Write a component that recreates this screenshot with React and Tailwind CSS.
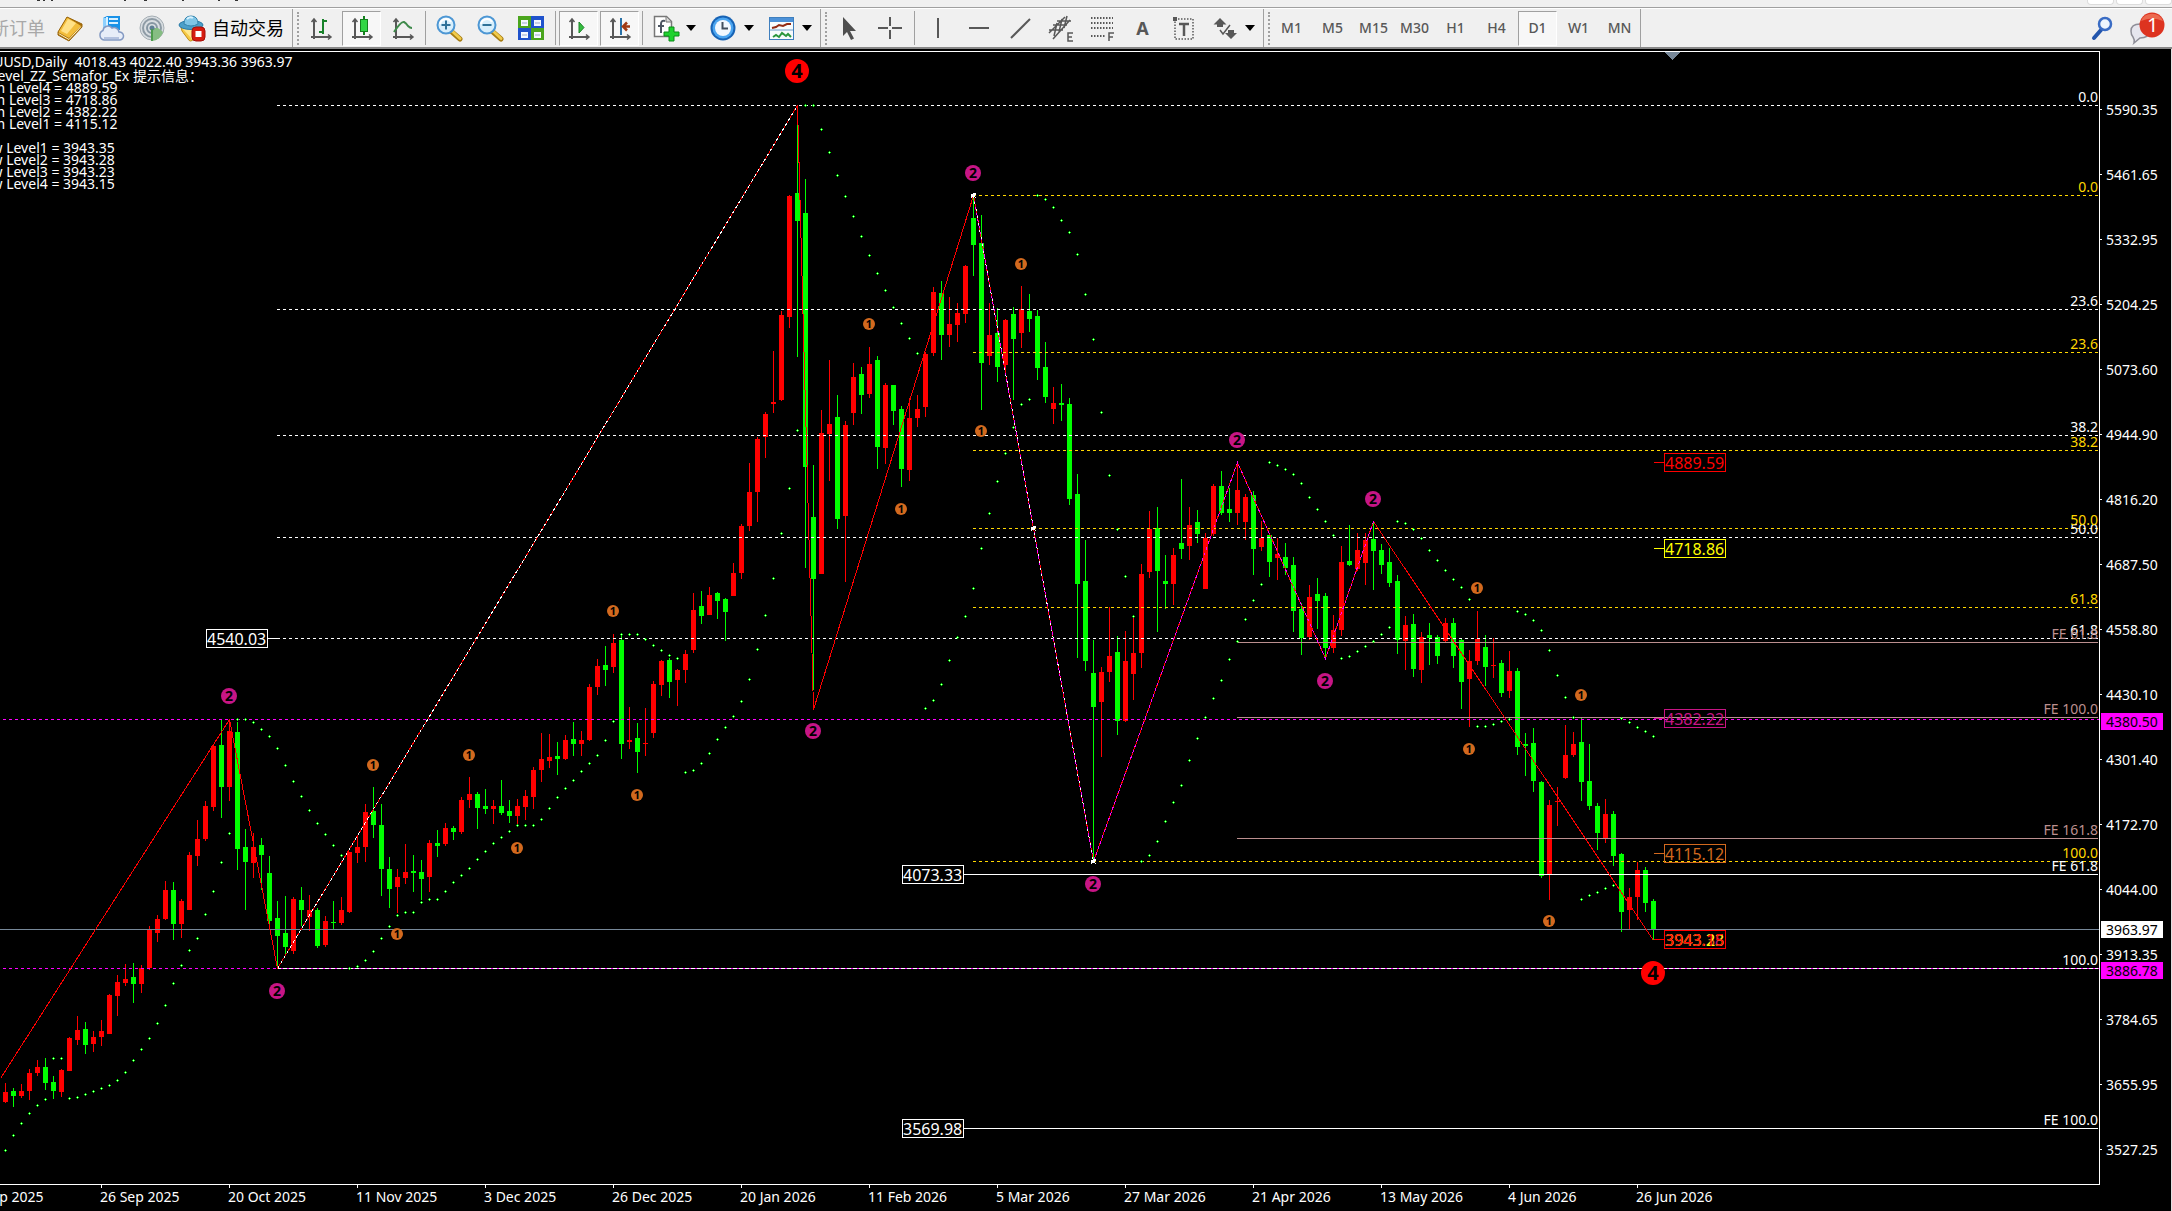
import React from "react";

/* One candle per row: high, body top, body bottom, low, colour (r = up, g = down). */
const CANDLES = `1083 1092 1102 1103 r|1088 1091 1096 1107 g|1084 1091 1096 1098 r|1069 1073 1091 1100 r|1060 1067 1073 1076 r|1058 1067 1083 1090 g|1076 1082 1091 1099 g|1069 1070 1092 1097 r|1037 1038 1071 1071 r|1016 1030 1040 1045 r
1022 1029 1045 1054 g|1031 1037 1044 1052 r|1020 1031 1037 1046 r|994 995 1034 1034 r|975 982 996 1016 r|964 979 983 986 r|963 977 984 1003 g|965 968 984 993 r|926 930 968 970 r|915 919 933 942 r
881 890 919 920 r|882 890 924 940 g|899 901 924 938 r|852 855 910 910 r|820 839 856 866 r|801 806 839 841 r|745 746 807 811 r|720 745 787 818 g|720 731 787 801 r|722 732 849 870 g
829 847 862 910 g|833 847 863 878 r|838 845 855 890 g|856 873 921 924 g|901 918 936 968 g|896 933 947 955 g|897 899 951 954 r|887 900 910 926 g|895 910 917 931 r|908 910 946 948 g
916 921 945 947 r|901 922 923 930 g|897 910 923 925 r|852 852 912 913 r|837 847 853 863 r|804 812 847 862 r|787 811 825 838 g|804 825 869 896 g|857 869 889 908 g|869 877 887 913 r
844 872 878 884 r|855 871 873 892 g|860 872 879 900 g|840 843 877 892 r|830 843 846 857 g|823 828 844 846 r|826 828 832 840 g|797 800 832 834 r|777 794 800 808 r|792 794 808 829 g
789 806 809 814 g|800 806 809 824 r|780 806 813 815 g|800 811 816 823 g|799 806 816 826 r|790 796 807 820 r|767 770 797 809 r|733 759 770 782 r|734 757 761 768 r|742 756 759 775 g
735 740 759 760 r|722 739 744 756 g|731 740 744 756 r|684 687 740 741 r|659 666 687 695 r|646 665 670 686 g|634 643 667 673 r|635 640 744 759 g|707 740 742 749 r|723 738 752 773 g
708 743 744 756 r|681 684 733 738 r|660 661 685 696 r|658 660 682 698 g|669 670 680 706 r|650 654 670 683 r|593 610 650 653 r|591 606 616 624 g|587 595 615 615 r|592 593 601 619 g
598 599 612 641 g|563 573 596 596 r|524 526 573 579 r|463 492 526 531 r|437 439 492 522 r|412 414 437 458 r|351 402 404 413 r|311 315 400 401 r|195 196 317 328 r|124 193 221 357 g
179 213 467 568 g|465 517 579 690 g|410 433 574 574 r|360 424 434 481 r|395 417 519 529 g|421 425 516 582 r|363 377 413 425 r|367 374 395 414 g|347 364 394 398 r|356 360 447 469 g
383 385 448 464 r|385 385 411 425 g|406 409 469 487 g|398 418 470 481 r|395 409 418 427 r|352 354 407 417 r|287 292 353 356 r|281 293 335 360 g|297 324 335 347 r|303 313 325 342 r
265 266 314 323 r|196 218 245 276 g|215 243 363 410 g|303 335 356 365 r|308 333 367 382 g|319 320 365 375 r|307 314 339 400 g|286 309 333 348 r|294 311 319 332 g|310 316 368 380 g
342 367 397 403 g|387 403 409 424 r|384 403 405 421 g|398 404 499 505 g|474 494 584 658 g|540 581 661 671 g|640 673 707 861 g|667 672 702 757 r|607 656 672 682 r|636 652 721 735 g
631 661 721 722 r|617 653 674 700 r|564 574 653 668 r|511 529 572 578 r|507 528 571 632 g|555 581 584 609 g|548 555 584 605 r|479 543 549 559 g|507 525 546 560 r|510 522 534 543 g
533 538 589 589 r|484 486 534 536 r|471 486 513 515 g|488 509 513 522 g|464 490 513 525 r|494 497 522 540 r|491 495 549 575 g|521 538 547 551 r|533 535 562 577 g|538 554 558 580 r
543 557 568 575 g|557 565 611 632 g|603 609 638 655 g|585 597 637 640 r|578 594 601 629 g|593 596 648 658 g|615 630 648 653 r|546 562 630 636 r|525 561 565 566 g|533 550 569 571 r
533 540 563 585 r|522 539 551 590 g|544 550 565 574 g|548 562 583 587 g|575 581 640 654 g|616 625 641 670 r|614 624 669 677 g|632 637 670 683 r|623 635 638 665 g|635 637 656 664 g
618 623 641 642 r|618 623 656 668 g|638 640 682 709 g|650 661 679 727 r|611 639 661 665 r|635 647 667 686 g|638 665 666 678 r|660 663 693 697 g|651 671 691 698 r|668 671 747 755 g
733 744 746 776 g|728 743 781 792 g|781 782 876 878 g|800 805 874 900 r|787 801 802 826 r|725 755 778 779 r|732 744 755 757 r|718 742 782 801 g|744 781 806 810 g|803 806 833 850 g
799 814 838 843 r|811 814 856 866 g|853 854 912 932 g|888 897 910 930 r|862 870 897 920 r|867 870 903 912 g|899 901 930 940 g`
  .split(/[|\n]/)
  .map((row) => row.split(" "))
  .map(([h, t, b, l, c]) => ({ h: +h, t: +t, b: +b, l: +l, up: c === "r" }));

/* Parabolic SAR, one value per candle. */
const SAR = [
  1150, 1135, 1123, 1113, 1105, 1099, 1058, 1058, 1098, 1097, 1094, 1091, 1088, 1085, 1080, 1072, 1060, 1049, 1038, 1023,
  1005, 983, 965, 950, 938, 914, 891, 862, 833, 719, 719, 722, 729, 736, 748, 765, 781, 796, 810, 823,
  834, 845, 855, 968, 966, 960, 951, 938, 926, 915, 912, 912, 902, 899, 899, 891, 882, 875, 868, 859,
  851, 843, 837, 831, 825, 825, 825, 819, 808, 797, 788, 780, 771, 763, 755, 740, 721, 634, 634, 634,
  639, 645, 650, 655, 658, 772, 770, 763, 753, 739, 727, 716, 701, 679, 649, 615, 578, 533, 488, 430,
  105, 105, 129, 152, 175, 196, 216, 236, 255, 273, 290, 307, 323, 338, 353, 708, 700, 684, 660, 637,
  616, 588, 548, 513, 481, 453, 427, 404, 399, 195, 199, 207, 220, 232, 254, 294, 339, 412, 475, 529,
  576, 616, 861, 855, 841, 821, 802, 785, 760, 738, 717, 698, 680, 659, 641, 619, 600, 584, 462, 465,
  469, 474, 483, 497, 509, 521, 535, 658, 656, 651, 646, 641, 634, 627, 521, 523, 529, 538, 550, 560,
  570, 579, 587, 599, 726, 726, 724, 721, 719, 611, 614, 620, 630, 650, 675, 697, 717, 899, 895, 892,
  888, 885, 718, 722, 727, 731, 736,
];

const barX = (i) => 5 + 8 * i;

const WHITE = "#ffffff";
const GOLD = "#ffd700";
const ROSY = "#bc8f8f";

const LEVELS = [
  { y: 105, x: 277, label: "0.0", color: WHITE, dashed: true },
  { y: 309, x: 277, label: "23.6", color: WHITE, dashed: true },
  { y: 435, x: 277, label: "38.2", color: WHITE, dashed: true },
  { y: 537, x: 277, label: "50.0", color: WHITE, dashed: true },
  { y: 638, x: 277, label: "61.8", color: WHITE, dashed: true },
  { y: 968, x: 277, label: "100.0", color: WHITE, dashed: true },
  { y: 195, x: 973, label: "0.0", color: GOLD, dashed: true },
  { y: 352, x: 973, label: "23.6", color: GOLD, dashed: true },
  { y: 450, x: 973, label: "38.2", color: GOLD, dashed: true },
  { y: 528, x: 973, label: "50.0", color: GOLD, dashed: true },
  { y: 607, x: 973, label: "61.8", color: GOLD, dashed: true },
  { y: 861, x: 973, label: "100.0", color: GOLD, dashed: true },
  { y: 642, x: 1237, label: "FE 61.8", color: ROSY },
  { y: 717, x: 1237, label: "FE 100.0", color: ROSY },
  { y: 838, x: 1237, label: "FE 161.8", color: ROSY },
  { y: 874, x: 964, label: "FE 61.8", color: WHITE },
  { y: 1128, x: 964, label: "FE 100.0", color: WHITE },
];

const TURNS = [[0, 1078], [229, 719], [277, 968], [797, 105], [813, 709], [973, 195], [1093, 861], [1237, 462], [1325, 658], [1373, 521], [1653, 940]];
const toPoints = (list) => list.map(([x, y]) => `${x}.5,${y}.5`).join(" ");

const MARKS = [
  { n: 2, at: [[229, 696], [277, 991], [973, 173], [813, 731], [1237, 440], [1373, 499], [1325, 681], [1093, 884]], r: 8, color: "#c71585", size: 14 },
  { n: 1, at: [[373, 765], [469, 755], [397, 934], [517, 848], [613, 611], [637, 795], [869, 324], [1021, 264], [981, 431], [901, 509], [1477, 588], [1469, 749], [1581, 695], [1549, 921]], r: 6, color: "#d2691e", size: 11 },
  { n: 4, at: [[797, 71], [1653, 973]], r: 12, color: "#ff0000", size: 20 },
];

const TAGS = [
  { x: 206, y: 629, text: "4540.03", color: WHITE, side: "left" },
  { x: 902, y: 865, text: "4073.33", color: WHITE },
  { x: 902, y: 1119, text: "3569.98", color: WHITE },
  { x: 1664, y: 453, text: "4889.59", color: "#ff0000", side: "right" },
  { x: 1664, y: 539, text: "4718.86", color: "#ffff00", side: "right" },
  { x: 1664, y: 709, text: "4382.22", color: "#c71585", side: "right" },
  { x: 1664, y: 844, text: "4115.12", color: "#d2691e", side: "right" },
  { x: 1664, y: 930, text: "3943.35", color: "#d2691e", side: "right" },
  { x: 1664, y: 930, text: "3943.28", color: "#c71585", side: "right" },
  { x: 1664, y: 930, text: "3943.23", color: "#ffff00", side: "right" },
  { x: 1664, y: 930, text: "3943.15", color: "#ff0000", side: "right" },
];

const PRICES = ["5590.35", "5461.65", "5332.95", "5204.25", "5073.60", "4944.90", "4816.20", "4687.50", "4558.80", "4430.10", "4301.40", "4172.70", "4044.00", "3913.35", "3784.65", "3655.95", "3527.25"];
const DATES = ["4 Sep 2025", "26 Sep 2025", "20 Oct 2025", "11 Nov 2025", "3 Dec 2025", "26 Dec 2025", "20 Jan 2026", "11 Feb 2026", "5 Mar 2026", "27 Mar 2026", "21 Apr 2026", "13 May 2026", "4 Jun 2026", "26 Jun 2026"];

function Plot() {
  return (
    <svg viewBox="0 52 2099 1132" className="block h-auto w-full" fontFamily='"Noto Sans", sans-serif' role="img" aria-label="XAUUSD daily chart">
      <g shapeRendering="crispEdges">
        <path d="M1664 52h17l-8.500 8z" fill="#778899" />
        {CANDLES.map((c, i) => (
          <g key={i} fill={c.up ? "#ff0000" : "#00ff00"}>
            <rect x={barX(i)} y={c.h} width="1" height={Math.max(c.l - c.h, 1)} />
            <rect x={barX(i) - 2} y={c.t} width="5" height={Math.max(c.b - c.t, 1)} />
          </g>
        ))}
        <path d="M0 719.5H2099" stroke="#ff00ff" strokeDasharray="3 3" strokeDashoffset="3" />
        <path d="M0 968.5H277" stroke="#ff00ff" strokeDasharray="3 3" strokeDashoffset="3" />
        <path d="M277 968.5H2099" stroke="#ff00ff" />
        {LEVELS.map((l) => (
          <path key={l.y} d={`M${l.x} ${l.y}.5H2098`} stroke={l.color} strokeDasharray={l.dashed ? (l.y === 968 ? "4 2" : "3 3") : undefined} />
        ))}
        <path d="M0 929.5H2099" stroke="#778899" />
        <polyline points={toPoints(TURNS)} fill="none" stroke="#ff0000" />
        <polyline points={toPoints(TURNS.slice(2, 4))} fill="none" stroke={WHITE} strokeDasharray="3 3" />
        <polyline points={toPoints(TURNS.slice(5, 10))} fill="none" stroke="#ff00ff" strokeDasharray="3 3" />
        <polyline points={toPoints(TURNS.slice(5, 7))} fill="none" stroke={WHITE} strokeDasharray="2 5" />
        {[[973, 195], [1033, 528], [1093, 861]].map(([x, y]) => (
          <path key={x} d={`M${x - 2} ${y - 1}h5v1h-1v2h1v1h-1v-1h-3v1h-1zM${x} ${y - 2}h3v1h-3z`} fill={WHITE} />
        ))}
        {SAR.map((y, i) => (
          <g key={i}>
            <path d={`M${barX(i) - 1} ${y}h3v1h-3zM${barX(i)} ${y - 1}h1v3h-1z`} fill="#00ff00" />
            <rect x={barX(i)} y={y} width="1" height="1" fill="#c8ffc8" />
          </g>
        ))}
      </g>
      {LEVELS.map((l) => (
        <text key={l.y} x="2098" y={l.y - 3} fontSize="14" textAnchor="end" fill={l.color}>{l.label}</text>
      ))}
      {MARKS.map((m) =>
        m.at.map(([x, y]) => (
          <g key={`${x}-${y}`}>
            <circle cx={x} cy={y} r={m.r} fill={m.color} />
            <text x={x} y={y + Math.round(m.size * 0.36)} fontSize={m.size} fontWeight="700" textAnchor="middle" fill="#000">{m.n}</text>
          </g>
        ))
      )}
      {TAGS.map((t) => (
        <g key={t.text}>
          <g shapeRendering="crispEdges" fill="none" stroke={t.color}>
            <rect x={t.x + 0.5} y={t.y + 0.5} width="61" height="18" />
            {t.side === "left" && <path d={`M${t.x + 62} ${t.y + 9}.5h12`} />}
            {t.side === "right" && <path d={`M${t.x - 10} ${t.y + 9}.5h10`} />}
          </g>
          <text x={t.x + 1} y={t.y + 16} fontSize="16" fill={t.color}>{t.text}</text>
        </g>
      ))}
    </svg>
  );
}

function PriceAxis() {
  return (
    <div className="relative flex w-[72px] shrink-0 flex-col border-l border-white py-px">
      <div className="flex-[25]" />
      {PRICES.map((p) => (
        <div key={p} className="flex flex-[65] items-center gap-1">
          <span className="h-px w-0.5 bg-white" />
          <span>{p}</span>
        </div>
      ))}
      <div className="flex-[2]" />
      <span className="absolute left-px top-[58.4%] w-[62px] bg-[#ff00ff] pl-[5px] leading-[17px] text-black">4380.50</span>
      <span className="absolute left-px top-[76.7%] w-[62px] bg-white pl-[5px] leading-[17px] text-black">3963.97</span>
      <span className="absolute left-px top-[80.3%] w-[62px] bg-[#ff00ff] pl-[5px] leading-[17px] text-black">3886.78</span>
    </div>
  );
}

function DateAxis() {
  return (
    <div className="-ml-7 flex">
      {DATES.map((d) => (
        <div key={d} className="w-32 shrink-0">
          <div className="ml-px h-[3px] w-px bg-white" />
          <div className="leading-[18px]">{d}</div>
        </div>
      ))}
    </div>
  );
}

/* ---------- toolbar ---------- */

function Icon({ children }) {
  return (
    <svg viewBox="0 0 28 28" className="block size-7 shrink-0" aria-hidden="true">
      {children}
    </svg>
  );
}

const Axes = () => (
  <g stroke="#585858" strokeWidth="2" fill="none">
    <path d="M7 25V6M4 23h19" />
    <path d="M4.500 8 7 5l2.500 3M21 20.500l3 2.500-3 2.500" strokeWidth="1.500" />
  </g>
);

const BookIcon = () => (
  <Icon>
    <path d="M11 3 2 18v3l11 6 13-14v-3z" fill="#a86f08" />
    <path d="M11 3 2 18l11 6 12-12z" fill="#f2bd3c" />
    <path d="M12 5 5 17l6 3 9-11z" fill="#ffe187" />
    <path d="m2.500 19.500 10.500 6 12-13" fill="none" stroke="#fff2bf" />
    <path d="M11 3 2 18v3l11 6 13-14v-3z" fill="none" stroke="#99640a" />
  </Icon>
);
const CloudIcon = () => (
  <Icon>
    <path d="M6 4 10 2h13v14H6z" fill="#1992e8" />
    <path d="M6 4h4v14H6z" fill="#8ed1ff" />
    <path d="M12 5h9M12 9h9M10 3v14" stroke="#d7f0ff" strokeWidth="2" />
    <path d="M7 26a5 5 0 0 1-1-9.500 5 5 0 0 1 9-2.500 5 5 0 0 1 7 4 4 4 0 0 1 1 8z" fill="#e7edf8" stroke="#8399c2" strokeWidth="1.500" />
    <path d="M7 24h15" stroke="#b4c2df" strokeWidth="2" />
  </Icon>
);
const SignalIcon = () => (
  <Icon>
    <circle cx="14" cy="14" r="12" fill="#d9dee2" stroke="#a4adb3" />
    <circle cx="14" cy="14" r="9" fill="none" stroke="#8e9ba5" strokeWidth="2" />
    <circle cx="14" cy="14" r="5" fill="none" stroke="#8797a3" strokeWidth="2" />
    <path d="M14 14v13a12 12 0 0 0 11-9l-5-4z" fill="#86bd83" />
    <circle cx="14" cy="14" r="2.500" fill="#5f7f94" />
    <path d="M14 15v12" stroke="#4c9b4c" strokeWidth="2" />
  </Icon>
);
const AutoIcon = () => (
  <Icon>
    <path d="M3 13h21l-8 12q-4 4-6 0L4 17z" fill="#f6c945" stroke="#c08c16" />
    <path d="M5 15 14 25l2-10z" fill="#ffe88f" />
    <ellipse cx="13" cy="11" rx="12" ry="4.500" fill="#4b9fc9" stroke="#2c7ba6" />
    <path d="M6 10q0-8 7-8t7 8q-7 4-14 0z" fill="#7fc5e6" stroke="#3484ad" />
    <path d="M9 5q3-3 6-1" stroke="#d8f2ff" strokeWidth="2" fill="none" />
    <rect x="14" y="13" width="13" height="14" rx="4" fill="#d61c10" stroke="#a50f08" />
    <rect x="17.500" y="17" width="6" height="6" fill="#fff" />
  </Icon>
);
const BarsIcon = () => (
  <Icon>
    <Axes />
    <path d="M16 5v15M16 7h4M12 18h4" stroke="#18822a" strokeWidth="2" />
  </Icon>
);
const CandleIcon = () => (
  <Icon>
    <Axes />
    <path d="M16 2v19" stroke="#14801e" strokeWidth="2" />
    <rect x="12.500" y="5.500" width="7" height="12" fill="#32d645" stroke="#14801e" />
  </Icon>
);
const LineIcon = () => (
  <Icon>
    <Axes />
    <path d="M5 18q7-11 10-10 2 1 4 4 2 2 4 2" fill="none" stroke="#3f8a4b" strokeWidth="2" />
  </Icon>
);
const Magnifier = ({ plus }) => (
  <Icon>
    <path d="m17 18 8 7" stroke="#a67c12" strokeWidth="5" strokeLinecap="round" />
    <path d="m17 17 8 7.500" stroke="#f1cb4b" strokeWidth="3" strokeLinecap="round" />
    <circle cx="11" cy="11" r="8.500" fill="#d8effc" stroke="#4d97d4" strokeWidth="2" />
    <path d="M5 10a6 6 0 0 1 11-2" stroke="#fff" strokeWidth="2" fill="none" />
    <path d={plus ? "M6.500 11h9M11 6.500v9" : "M6.500 11h9"} stroke="#2f7299" strokeWidth="2" />
  </Icon>
);
const TilesIcon = () => (
  <Icon>
    <g>
      <path d="M1 2h13v12H1zM14 14h13v12H14z" fill="#4aa51d" />
      <path d="M14 2h13v12H14zM1 14h13v12H1z" fill="#1f52cc" />
      <path d="M4 6h7v6H4zM17 6h7v6h-7zM4 18h7v6H4zM17 18h7v6h-7z" fill="#f4f8ff" />
      <path d="M5 9h5M18 9h5M5 21h5M18 21h5" stroke="#9aa9c9" />
    </g>
  </Icon>
);
const ScrollIcon = () => (
  <Icon>
    <Axes />
    <path d="m14 8 5 5.500-5 5.500z" fill="#35bd3f" stroke="#1a8427" />
  </Icon>
);
const ShiftIcon = () => (
  <Icon>
    <Axes />
    <path d="M15 4v17" stroke="#2b72a8" strokeWidth="2" />
    <path d="M24 12.500h-6m3-4-4 4 4 4" stroke="#a23a13" strokeWidth="2.500" fill="none" />
  </Icon>
);
const IndicatorIcon = () => (
  <Icon>
    <path d="M2.500 2.500h12l5 5v15h-17z" fill="#fff" stroke="#777" strokeWidth="1.500" />
    <path d="M14 3v5h5" fill="#ddd" stroke="#777" />
    <path d="M13 7q-4-1-4 3v9M6 12h6" fill="none" stroke="#4d5662" strokeWidth="2" />
    <path d="M17 13h5v5h5v4h-5v5h-5v-5h-5v-4h5z" fill="#1fd22f" stroke="#0b8c18" />
  </Icon>
);
const ClockIcon = () => (
  <Icon>
    <circle cx="13" cy="14" r="12.500" fill="#1763b5" />
    <circle cx="13" cy="14" r="10.500" fill="#4ba5f0" />
    <circle cx="13" cy="14" r="8" fill="#f2f8fe" />
    <path d="M12.500 8v6.500H18" fill="none" stroke="#424f5d" strokeWidth="2" />
  </Icon>
);
const TemplateIcon = () => (
  <Icon>
    <rect x="1.500" y="3.500" width="24" height="22" fill="#f8fbfd" stroke="#3f7fbe" />
    <path d="M2 4h23v4H2z" fill="#4c91d8" />
    <path d="M2 16h23" stroke="#6f9ec9" />
    <path d="m4 14 4-1 3-2 4 1 4-2 4 0" fill="none" stroke="#922b14" strokeWidth="2" />
    <path d="m5 23 3-2 3 2 3-4 4 3 2-2 3 3" fill="none" stroke="#2b963d" strokeWidth="2" />
  </Icon>
);
const CursorIcon = () => (
  <Icon><path d="M8 3v19l4-4 4 8 3-1.500-4-7.500h6z" fill="#4f4f4f" /></Icon>
);
const CrossIcon = () => (
  <Icon><path d="M14 3v9M14 16v9M2 14h10M16 14h10" stroke="#585858" strokeWidth="2" /></Icon>
);
const StrokeIcon = ({ d }) => (
  <Icon><path d={d} stroke="#585858" strokeWidth="2" fill="none" /></Icon>
);
const ChannelIcon = () => (
  <Icon>
    <path d="M2 19 18 3M6 25 23 6M2 16h14M6 11h14M10 7h14M7 22l3-13M12 18l3-13M17 14l3-12" stroke="#585858" strokeWidth="1.500" fill="none" />
    <path d="M26 19h-5v8h5M21 23h4" stroke="#585858" strokeWidth="1.500" fill="none" />
  </Icon>
);
const FiboIcon = () => (
  <Icon>
    <path d="M3 4h22M3 9h22M3 14h22M3 22h14" stroke="#585858" strokeWidth="2" strokeDasharray="1.500 1.500" />
    <path d="M26 19h-5v8M21 23h4" stroke="#585858" strokeWidth="1.500" fill="none" />
  </Icon>
);
const LabelIcon = () => (
  <Icon>
    <rect x="5" y="5" width="18" height="20" fill="none" stroke="#585858" strokeDasharray="1.500 1.500" strokeWidth="1.500" />
    <path d="M3 3h4v4H3z" fill="#585858" />
    <path d="M9 10h10M14 10v12" stroke="#585858" strokeWidth="2.500" />
  </Icon>
);
const ShapesIcon = () => (
  <Icon>
    <path d="m9 4 6.500 6.500H12V13H6v-2.500H2.500zM20 25l-6-6h3v-3h6v3h3z" fill="#585858" />
    <path d="m9 16 3 4 7-9" fill="none" stroke="#585858" strokeWidth="1.500" />
  </Icon>
);

function Tool({ label, pressed, children }) {
  return (
    <button
      type="button"
      aria-label={label}
      aria-pressed={pressed}
      className={
        pressed
          ? "mx-px flex h-[35px] w-[39px] shrink-0 items-center justify-center border border-b-white border-l-[#a0a0a0] border-r-white border-t-[#a0a0a0] bg-[#f7f7f7]"
          : "flex h-[35px] w-[41px] shrink-0 items-center justify-center"
      }
    >
      {children}
    </button>
  );
}

function MenuTool({ label, children }) {
  return (
    <button type="button" aria-label={label} className="flex h-[35px] w-[58px] shrink-0 items-center gap-1.5 pl-[7px]">
      {children}
      <svg viewBox="0 0 10 6" className="h-1.5 w-2.5" aria-hidden="true"><path d="M0 0h10L5 6z" fill="#000" /></svg>
    </button>
  );
}

const Divider = () => <span className="mx-0.5 h-[34px] w-px shrink-0 bg-[#a0a0a0]" />;
const GroupEdge = () => (
  <span className="flex h-full shrink-0 items-center gap-1 px-px">
    <span className="h-full w-px bg-[#a0a0a0]" />
    <span className="h-[33px] w-0 border-l-2 border-dotted border-[#a0a0a0]" />
  </span>
);

function Toolbar() {
  return (
    <div className="flex h-[38px] items-center overflow-hidden bg-[#f0f0f0]">
      <button type="button" className="-ml-[9px] w-[58px] shrink-0 whitespace-nowrap text-left text-lg leading-6 text-[#a8a8a8]">新订单</button>
      <Tool label="MetaEditor"><BookIcon /></Tool>
      <Tool label="VPS"><CloudIcon /></Tool>
      <Tool label="Signals"><SignalIcon /></Tool>
      <button type="button" className="flex w-[119px] shrink-0 items-center gap-1.5 whitespace-nowrap pl-1.5 text-lg leading-6 text-black">
        <AutoIcon />
        自动交易
      </button>
      <GroupEdge />
      <Tool label="Bar chart"><BarsIcon /></Tool>
      <Tool label="Candlesticks" pressed><CandleIcon /></Tool>
      <Tool label="Line chart"><LineIcon /></Tool>
      <Divider />
      <Tool label="Zoom in"><Magnifier plus /></Tool>
      <Tool label="Zoom out"><Magnifier /></Tool>
      <Tool label="Tile windows"><TilesIcon /></Tool>
      <span className="w-0.5 shrink-0" />
      <Divider />
      <Tool label="Auto scroll" pressed><ScrollIcon /></Tool>
      <Tool label="Chart shift" pressed><ShiftIcon /></Tool>
      <Divider />
      <MenuTool label="Indicators"><IndicatorIcon /></MenuTool>
      <MenuTool label="Periods"><ClockIcon /></MenuTool>
      <MenuTool label="Templates"><TemplateIcon /></MenuTool>
      <GroupEdge />
      <Tool label="Cursor"><CursorIcon /></Tool>
      <Tool label="Crosshair"><CrossIcon /></Tool>
      <span className="w-0.5 shrink-0" />
      <Divider />
      <Tool label="Vertical line"><StrokeIcon d="M14 4v20" /></Tool>
      <Tool label="Horizontal line"><StrokeIcon d="M4 14h20" /></Tool>
      <Tool label="Trend line"><StrokeIcon d="M5 24 24 5" /></Tool>
      <Tool label="Channel"><ChannelIcon /></Tool>
      <Tool label="Fibonacci"><FiboIcon /></Tool>
      <Tool label="Text"><span className="text-lg font-bold leading-6 text-[#585858]">A</span></Tool>
      <Tool label="Text label"><LabelIcon /></Tool>
      <MenuTool label="Arrows"><ShapesIcon /></MenuTool>
      <GroupEdge />
      {["M1", "M5", "M15", "M30", "H1", "H4", "D1", "W1", "MN"].map((t) => (
        <Tool key={t} label={t} pressed={t === "D1"}>
          <span className="text-sm font-medium text-[#585858]">{t}</span>
        </Tool>
      ))}
      <span className="h-full w-px shrink-0 bg-[#a0a0a0]" />
      <div className="ml-auto flex items-center gap-2.5 pr-1.5">
        <button type="button" aria-label="Search">
          <Icon>
            <path d="m13 16-7 8" stroke="#2456ad" strokeWidth="4" strokeLinecap="round" />
            <circle cx="17" cy="10" r="6" fill="#eef5fd" stroke="#3a6cc4" strokeWidth="2.500" />
          </Icon>
        </button>
        <button type="button" aria-label="Notifications" className="relative h-9 w-10">
          <svg viewBox="0 0 40 36" className="block h-9 w-10" aria-hidden="true">
            <path d="M5 21q0-7 9-7t9 7-9 7l-6 5q1-3-1-6-2-2-2-6z" fill="#e6e6ee" stroke="#8e8e98" strokeWidth="1.500" />
            <circle cx="26" cy="15" r="12.500" fill="#dd3320" />
            <path d="M15 11a12 12 0 0 1 22 0q-11-5-22 0z" fill="#ec6a50" />
          </svg>
          <span className="absolute left-[21px] top-[3px] text-xl leading-6 text-white">1</span>
        </button>
      </div>
    </div>
  );
}

export default function App() {
  return (
    <div className="flex min-h-screen flex-col overflow-hidden bg-black font-['Noto_Sans','Noto_Sans_CJK_SC',sans-serif] text-sm text-white">
      <div className="flex h-[7px] items-start justify-end gap-0.5 bg-[#f0f0f0]">
        <svg viewBox="0 0 240 2" className="mr-auto h-0.5 w-60" aria-hidden="true">
          <path d="M37 0h3v1h-3zM43 0h2v1h-2zM51 0h2v1h-2zM124 0h2v1h-2zM144 0h3v1h-3zM182 0h2v1h-2zM218 0h2v1h-2zM235 0h3v1h-3z" fill="#333" />
        </svg>
        <span className="h-[5px] w-[27px] rounded-b-sm border border-t-0 border-[#dcdcdc] bg-white" />
        <span className="h-[5px] w-[27px] rounded-b-sm border border-t-0 border-[#dcdcdc] bg-white" />
        <span className="h-[5px] w-[27px] rounded-b-sm border border-t-0 border-[#dcdcdc] bg-white" />
      </div>
      <div className="h-px bg-[#a0a0a0]" />
      <div className="h-px bg-white" />
      <Toolbar />
      <div className="h-0.5 bg-[#888888]" />

      <main className="flex flex-1 flex-col border-r border-[#e0e0e0] pt-0.5">
        <div className="flex">
          <div className="relative min-w-0 flex-1 border-y border-white">
            <Plot />
            <div className="absolute -left-6 top-0 whitespace-pre pt-px">
              <p className="leading-[18px]">XAUUSD,Daily  4018.43 4022.40 3943.36 3963.97</p>
              <div className="-mt-px leading-3">
                <p>3_Level_ZZ_Semafor_Ex 提示信息：</p>
                <div className="-ml-0.5">
                  <p>High Level4 = 4889.59</p>
                  <p>High Level3 = 4718.86</p>
                  <p>High Level2 = 4382.22</p>
                  <p>High Level1 = 4115.12</p>
                </div>
                <div className="mt-3">
                  <p>Low Level1 = 3943.35</p>
                  <p>Low Level2 = 3943.28</p>
                  <p>Low Level3 = 3943.23</p>
                  <p>Low Level4 = 3943.15</p>
                </div>
              </div>
            </div>
          </div>
          <PriceAxis />
        </div>
        <div className="overflow-hidden">
          <DateAxis />
        </div>
      </main>
    </div>
  );
}
